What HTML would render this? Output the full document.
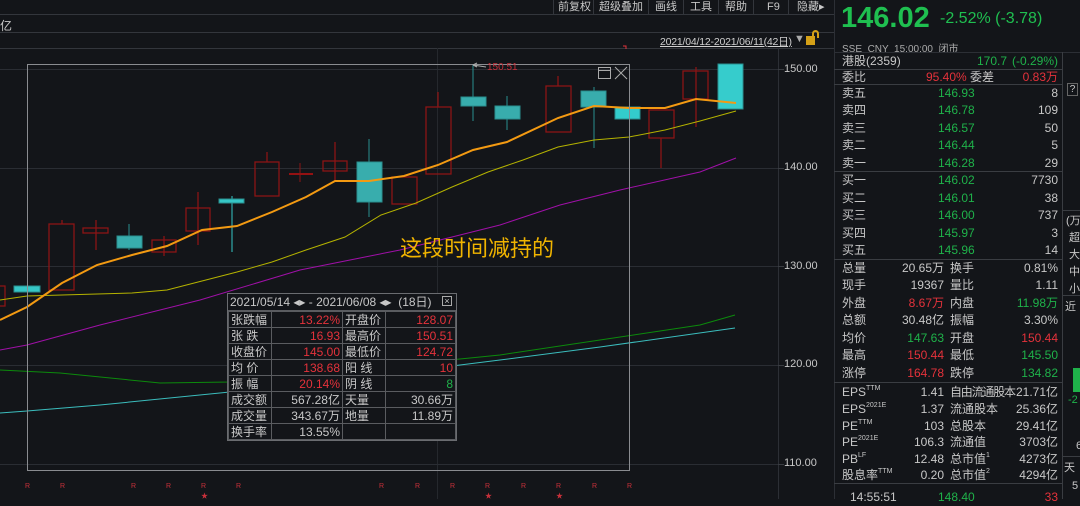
<!DOCTYPE html>
<html><head><meta charset="utf-8"><style>
*{margin:0;padding:0;box-sizing:border-box}
body{width:1080px;height:499px;background:#131519;overflow:hidden;position:relative;font-family:"Liberation Sans","Noto Sans CJK SC",sans-serif;color:#c8c8c8;font-size:12px}
.a{position:absolute;white-space:nowrap}
.r{color:#e5323b}.g{color:#1fb24a}.w{color:#c8c8c8}
.hl{position:absolute;height:1px;background:#2c2f35}
.row{position:absolute;left:842px;width:216px;height:17px;line-height:17px}
.row span{position:absolute;top:0}
sup{vertical-align:top;line-height:10px;font-size:7px}
.tb{position:absolute;left:227px;top:293px;width:230px;border:1px solid #6a6c70;background:#131519;font-size:12px}
.tb table{border-collapse:collapse;width:100%}
.tb td{border:1px solid #5a5c60;height:16px;line-height:14px;padding:0 2px}
.tb td.n{text-align:right}
</style></head><body>
<div class="hl" style="left:0;top:14px;width:834px;background:#33363c"></div>
<div class="hl" style="left:0;top:32px;width:834px;background:#33363c"></div>
<div class="hl" style="left:0;top:48px;width:834px;background:#33363c"></div>
<div class="a" style="left:0;top:17px;font-size:12px">亿</div>
<div class="a" style="left:553px;top:0;height:14px;width:281px;font-size:11px;line-height:14px">
<span class="a" style="left:0;width:1px;height:14px;background:#33363c"></span>
<span class="a" style="left:5px">前复权</span><span class="a" style="left:40px;width:1px;height:14px;background:#33363c"></span>
<span class="a" style="left:46px">超级叠加</span><span class="a" style="left:95px;width:1px;height:14px;background:#33363c"></span>
<span class="a" style="left:102px">画线</span><span class="a" style="left:130px;width:1px;height:14px;background:#33363c"></span>
<span class="a" style="left:137px">工具</span><span class="a" style="left:165px;width:1px;height:14px;background:#33363c"></span>
<span class="a" style="left:172px">帮助</span><span class="a" style="left:200px;width:1px;height:14px;background:#33363c"></span>
<span class="a" style="left:214px">F9</span><span class="a" style="left:235px;width:1px;height:14px;background:#33363c"></span>
<span class="a" style="left:244px">隐藏▸</span>
</div>
<div class="a" style="left:660px;top:34px;font-size:10.5px;text-decoration:underline;color:#d0d0d0;letter-spacing:-0.2px">2021/04/12-2021/06/11(42日)</div>
<div class="a" style="left:794px;top:33px;font-size:11px;color:#aaa">▼</div>
<div class="a" style="left:806px;top:36px;width:9px;height:9px;background:#d4a017"></div>
<div class="a" style="left:812px;top:30px;width:7px;height:8px;border:2px solid #d4a017;border-bottom:none;border-radius:4px 4px 0 0"></div>
<div class="a" style="left:778px;top:48px;width:1px;height:451px;background:#2c2f35"></div>
<div class="a" style="left:834px;top:0;width:1px;height:499px;background:#2c2f35"></div>
<div class="a" style="left:437px;top:48px;width:1px;height:451px;background:#25282d"></div>
<div class="a" style="left:784px;top:63px;font-size:11px">150.00</div>
<div class="a" style="left:784px;top:161px;font-size:11px">140.00</div>
<div class="a" style="left:784px;top:260px;font-size:11px">130.00</div>
<div class="a" style="left:784px;top:358px;font-size:11px">120.00</div>
<div class="a" style="left:784px;top:457px;font-size:11px">110.00</div>
<svg class="a" style="left:0;top:0" width="834" height="499">
<g stroke="#2a2d33" stroke-width="1">
<line x1="0" y1="69.5" x2="778" y2="69.5"/><line x1="0" y1="168.5" x2="778" y2="168.5"/><line x1="0" y1="266.5" x2="778" y2="266.5"/><line x1="0" y1="365.5" x2="778" y2="365.5"/><line x1="0" y1="464.5" x2="778" y2="464.5"/>
</g>
<g stroke="#3a3d42"><line x1="778" y1="69.5" x2="784" y2="69.5"/><line x1="778" y1="168.5" x2="784" y2="168.5"/><line x1="778" y1="266.5" x2="784" y2="266.5"/><line x1="778" y1="365.5" x2="784" y2="365.5"/><line x1="778" y1="464.5" x2="784" y2="464.5"/></g>
<g stroke="#8b1515" fill="none" stroke-width="1.3">
<rect x="-5" y="286" width="10" height="20"/>
<line x1="62" y1="220" x2="62" y2="224"/><rect x="49" y="224" width="25" height="66"/>
<line x1="96" y1="220" x2="96" y2="250"/><rect x="83" y="228" width="25" height="5"/>
<line x1="164" y1="236" x2="164" y2="256"/><rect x="152" y="240" width="24" height="12"/>
<line x1="198" y1="192" x2="198" y2="245"/><rect x="186" y="208" width="24" height="23"/>
<line x1="267" y1="152" x2="267" y2="162"/><rect x="255" y="162" width="24" height="34"/>
<line x1="335" y1="142" x2="335" y2="182"/><rect x="323" y="161" width="24" height="10"/>
<rect x="392" y="177" width="25" height="27"/>
<line x1="438" y1="92" x2="438" y2="107"/><rect x="426" y="107" width="25" height="67"/>
<line x1="558" y1="76" x2="558" y2="86"/><rect x="546" y="86" width="25" height="46"/>
<line x1="661" y1="138" x2="661" y2="168"/><rect x="649" y="110" width="25" height="28"/>
<line x1="696" y1="67" x2="696" y2="127"/><rect x="683" y="71" width="25" height="28"/>
</g>
<line x1="289" y1="174" x2="313" y2="174" stroke="#c01010" stroke-width="1.5"/><line x1="300" y1="163" x2="300" y2="182" stroke="#8b1515"/>
<g fill="#38adad" stroke="#2a8f8f">
<rect x="14" y="286" width="26" height="6" fill="#36c6c6"/>
<line x1="129" y1="224" x2="129" y2="250"/><rect x="117" y="236" width="25" height="12"/>
<line x1="232" y1="196" x2="232" y2="252" stroke="#36c6c6"/><rect x="219" y="199" width="25" height="4" fill="#36c6c6"/>
<line x1="369" y1="139" x2="369" y2="217"/><rect x="357" y="162" width="25" height="40"/>
<line x1="473" y1="65" x2="473" y2="121"/><rect x="461" y="97" width="25" height="9"/>
<line x1="507" y1="96" x2="507" y2="130"/><rect x="495" y="106" width="25" height="13"/>
<line x1="594" y1="87" x2="594" y2="148"/><rect x="581" y="91" width="25" height="16"/>
<rect x="615" y="107" width="25" height="12" fill="#3cc"/>
<rect x="718" y="64" width="25" height="45" fill="#36cccc"/>
</g>
<polyline fill="none" stroke="#b5b300" stroke-width="1" points="0,300 27,296 62,295 132,293 167,290 237,272 272,262 306,250 345,237 381,215 416,203 452,187 488,172 523,160 558,147 594,140 629,137 665,130 700,121 736,111"/>
<polyline fill="none" stroke="#a010a8" stroke-width="1" points="0,350 27,345 100,325 200,300 300,270 400,250 500,225 560,205 620,190 700,172 736,158"/>
<polyline fill="none" stroke="#0c8a0c" stroke-width="1" points="0,370 60,373 160,383 230,382 300,375 400,365 500,355 600,340 700,325 735,315"/>
<polyline fill="none" stroke="#3bbdbd" stroke-width="1" points="0,413 27,411 100,405 300,385 500,360 600,347 735,328"/>
<polyline fill="none" stroke="#f39a12" stroke-width="2" points="0,320 27,307 62,283 97,265 132,255 167,246 202,230 237,226 272,212 306,197 335,181 369,181 404,176 438,165 473,150 507,142 558,118 594,106 629,108 665,108 696,99 736,103"/>
<rect x="27.5" y="64.5" width="602" height="406" fill="none" stroke="#8a8c90" stroke-width="1"/>
<rect x="598.5" y="67.5" width="12" height="11" fill="none" stroke="#aaa"/><line x1="599" y1="70.5" x2="610" y2="70.5" stroke="#aaa"/>
<path d="M615 67 L627 79 M627 67 L615 79" stroke="#aaa"/>
<path d="M473 65 L486 67 M473 65 l4 -2 M473 65 l4 2" stroke="#aaa" fill="none"/>
<path d="M623 46 h3 v3" stroke="#e5323b" fill="none"/>
</svg>
<div class="a r" style="left:487px;top:62px;font-size:10px;color:#c8303a">150.51</div>
<div class="a" style="left:400px;top:231px;font-size:22px;color:#f0b400;font-family:'Noto Sans CJK SC',sans-serif">这段时间减持的</div>
<div class="a" style="top:483px;left:0;width:780px;font-size:7px;color:#c8303a">
<span class="a" style="left:25px">R</span><span class="a" style="left:60px">R</span><span class="a" style="left:131px">R</span><span class="a" style="left:166px">R</span><span class="a" style="left:201px">R</span><span class="a" style="left:236px">R</span><span class="a" style="left:379px">R</span><span class="a" style="left:415px">R</span><span class="a" style="left:450px">R</span><span class="a" style="left:485px">R</span><span class="a" style="left:521px">R</span><span class="a" style="left:556px">R</span><span class="a" style="left:592px">R</span><span class="a" style="left:627px">R</span>
<span class="a" style="left:201px;top:8px">★</span><span class="a" style="left:485px;top:8px">★</span><span class="a" style="left:556px;top:8px">★</span>
</div>
<div class="tb">
<div style="height:17px;line-height:16px;padding-left:2px;border-bottom:1px solid #5a5c60;position:relative">2021/05/14 ◂▸ - 2021/06/08 ◂▸ &nbsp;(18日)<span style="position:absolute;right:4px;top:2px;width:10px;height:10px;border:1px solid #aaa;font-size:9px;line-height:8px;text-align:center">×</span></div>
<table>
<tr><td style="width:43px">张跌幅</td><td class="n r" style="width:71px">13.22%</td><td style="width:43px">开盘价</td><td class="n r">128.07</td></tr>
<tr><td>张 跌</td><td class="n r">16.93</td><td>最高价</td><td class="n r">150.51</td></tr>
<tr><td>收盘价</td><td class="n r">145.00</td><td>最低价</td><td class="n r">124.72</td></tr>
<tr><td>均 价</td><td class="n r">138.68</td><td>阳 线</td><td class="n r">10</td></tr>
<tr><td>振 幅</td><td class="n r">20.14%</td><td>阴 线</td><td class="n g">8</td></tr>
<tr><td>成交额</td><td class="n">567.28亿</td><td>天量</td><td class="n">30.66万</td></tr>
<tr><td>成交量</td><td class="n">343.67万</td><td>地量</td><td class="n">11.89万</td></tr>
<tr><td>换手率</td><td class="n">13.55%</td><td></td><td></td></tr>
</table></div>
<div class="a g" style="left:841px;top:2px;font-size:29px;font-weight:bold;color:#1fbf50">146.02</div>
<div class="a g" style="left:940px;top:10px;font-size:16px;color:#1fbf50">-2.52% (-3.78)</div>
<div class="a" style="left:842px;top:40px;font-size:10px;color:#aaa">SSE &nbsp;CNY &nbsp;15:00:00 &nbsp;闭市</div>
<div class="hl" style="left:834px;top:52px;width:246px"></div>
<div class="hl" style="left:834px;top:69px;width:228px;background:#3a3d42"></div>
<div class="hl" style="left:834px;top:84px;width:228px;background:#3a3d42"></div>
<div class="hl" style="left:834px;top:171px;width:228px;background:#3a3d42"></div>
<div class="hl" style="left:834px;top:259px;width:228px;background:#3a3d42"></div>
<div class="hl" style="left:834px;top:382px;width:228px;background:#3a3d42"></div>
<div class="hl" style="left:834px;top:483px;width:228px;background:#3a3d42"></div>
<div class="a" style="left:1062px;top:52px;width:1px;height:447px;background:#3a3d42"></div>
<div class="hl" style="left:1062px;top:210px;width:18px;background:#3a3d42"></div>
<div class="hl" style="left:1062px;top:295px;width:18px;background:#3a3d42"></div>
<div class="hl" style="left:1062px;top:456px;width:18px;background:#3a3d42"></div>
<div class="a" style="left:1067px;top:83px;width:11px;height:13px;border:1px solid #666;font-size:10px;text-align:center;line-height:11px">?</div>
<div class="a" style="left:1066px;top:213px;font-size:11px;line-height:17px">(万<br>&nbsp;超<br>&nbsp;大<br>&nbsp;中<br>&nbsp;小</div>
<div class="a" style="left:1065px;top:298px;font-size:11px">近</div>
<div class="a" style="left:1073px;top:368px;width:7px;height:24px;background:#1fb24a"></div>
<div class="a g" style="left:1068px;top:394px;font-size:11px">-2</div>
<div class="a" style="left:1076px;top:440px;font-size:11px">6</div>
<div class="a" style="left:1064px;top:459px;font-size:11px">天</div>
<div class="a" style="left:1072px;top:480px;font-size:11px">5</div>
<div style="font-size:12px">
<div class="row" style="top:53px"><span>港股(2359)</span><span class="g" style="left:135px">170.7</span><span class="g" style="right:0">(-0.29%)</span></div>
<div class="row" style="top:69px"><span>委比</span><span class="r" style="left:84px">95.40%</span><span style="left:128px">委差</span><span class="r" style="right:0">0.83万</span></div>
<div class="row" style="top:85px"><span>卖五</span><span class="g" style="left:96px">146.93</span><span style="right:0">8</span></div>
<div class="row" style="top:102px"><span>卖四</span><span class="g" style="left:96px">146.78</span><span style="right:0">109</span></div>
<div class="row" style="top:120px"><span>卖三</span><span class="g" style="left:96px">146.57</span><span style="right:0">50</span></div>
<div class="row" style="top:137px"><span>卖二</span><span class="g" style="left:96px">146.44</span><span style="right:0">5</span></div>
<div class="row" style="top:155px"><span>卖一</span><span class="g" style="left:96px">146.28</span><span style="right:0">29</span></div>
<div class="row" style="top:172px"><span>买一</span><span class="g" style="left:96px">146.02</span><span style="right:0">7730</span></div>
<div class="row" style="top:190px"><span>买二</span><span class="g" style="left:96px">146.01</span><span style="right:0">38</span></div>
<div class="row" style="top:207px"><span>买三</span><span class="g" style="left:96px">146.00</span><span style="right:0">737</span></div>
<div class="row" style="top:225px"><span>买四</span><span class="g" style="left:96px">145.97</span><span style="right:0">3</span></div>
<div class="row" style="top:242px"><span>买五</span><span class="g" style="left:96px">145.96</span><span style="right:0">14</span></div>
<div class="row" style="top:260px"><span>总量</span><span style="right:114px">20.65万</span><span style="left:108px">换手</span><span style="right:0">0.81%</span></div>
<div class="row" style="top:277px"><span>现手</span><span style="right:114px">19367</span><span style="left:108px">量比</span><span style="right:0">1.11</span></div>
<div class="row" style="top:295px"><span>外盘</span><span class="r" style="right:114px">8.67万</span><span style="left:108px">内盘</span><span class="g" style="right:0">11.98万</span></div>
<div class="row" style="top:312px"><span>总额</span><span style="right:114px">30.48亿</span><span style="left:108px">振幅</span><span style="right:0">3.30%</span></div>
<div class="row" style="top:330px"><span>均价</span><span class="g" style="right:114px">147.63</span><span style="left:108px">开盘</span><span class="r" style="right:0">150.44</span></div>
<div class="row" style="top:347px"><span>最高</span><span class="r" style="right:114px">150.44</span><span style="left:108px">最低</span><span class="g" style="right:0">145.50</span></div>
<div class="row" style="top:365px"><span>涨停</span><span class="r" style="right:114px">164.78</span><span style="left:108px">跌停</span><span class="g" style="right:0">134.82</span></div>
<div class="row" style="top:384px"><span>EPS<sup>TTM</sup></span><span style="right:114px">1.41</span><span style="left:108px;letter-spacing:-1.2px">自由流通股本</span><span style="right:0">21.71亿</span></div>
<div class="row" style="top:401px"><span>EPS<sup>2021E</sup></span><span style="right:114px">1.37</span><span style="left:108px">流通股本</span><span style="right:0">25.36亿</span></div>
<div class="row" style="top:418px"><span>PE<sup>TTM</sup></span><span style="right:114px">103</span><span style="left:108px">总股本</span><span style="right:0">29.41亿</span></div>
<div class="row" style="top:434px"><span>PE<sup>2021E</sup></span><span style="right:114px">106.3</span><span style="left:108px">流通值</span><span style="right:0">3703亿</span></div>
<div class="row" style="top:451px"><span>PB<sup>LF</sup></span><span style="right:114px">12.48</span><span style="left:108px">总市值<sup>1</sup></span><span style="right:0">4273亿</span></div>
<div class="row" style="top:467px"><span>股息率<sup>TTM</sup></span><span style="right:114px">0.20</span><span style="left:108px">总市值<sup>2</sup></span><span style="right:0">4294亿</span></div>
<div class="row" style="top:489px"><span style="left:8px">14:55:51</span><span class="g" style="left:96px">148.40</span><span class="r" style="right:0">33</span></div>
</div>
</body></html>
